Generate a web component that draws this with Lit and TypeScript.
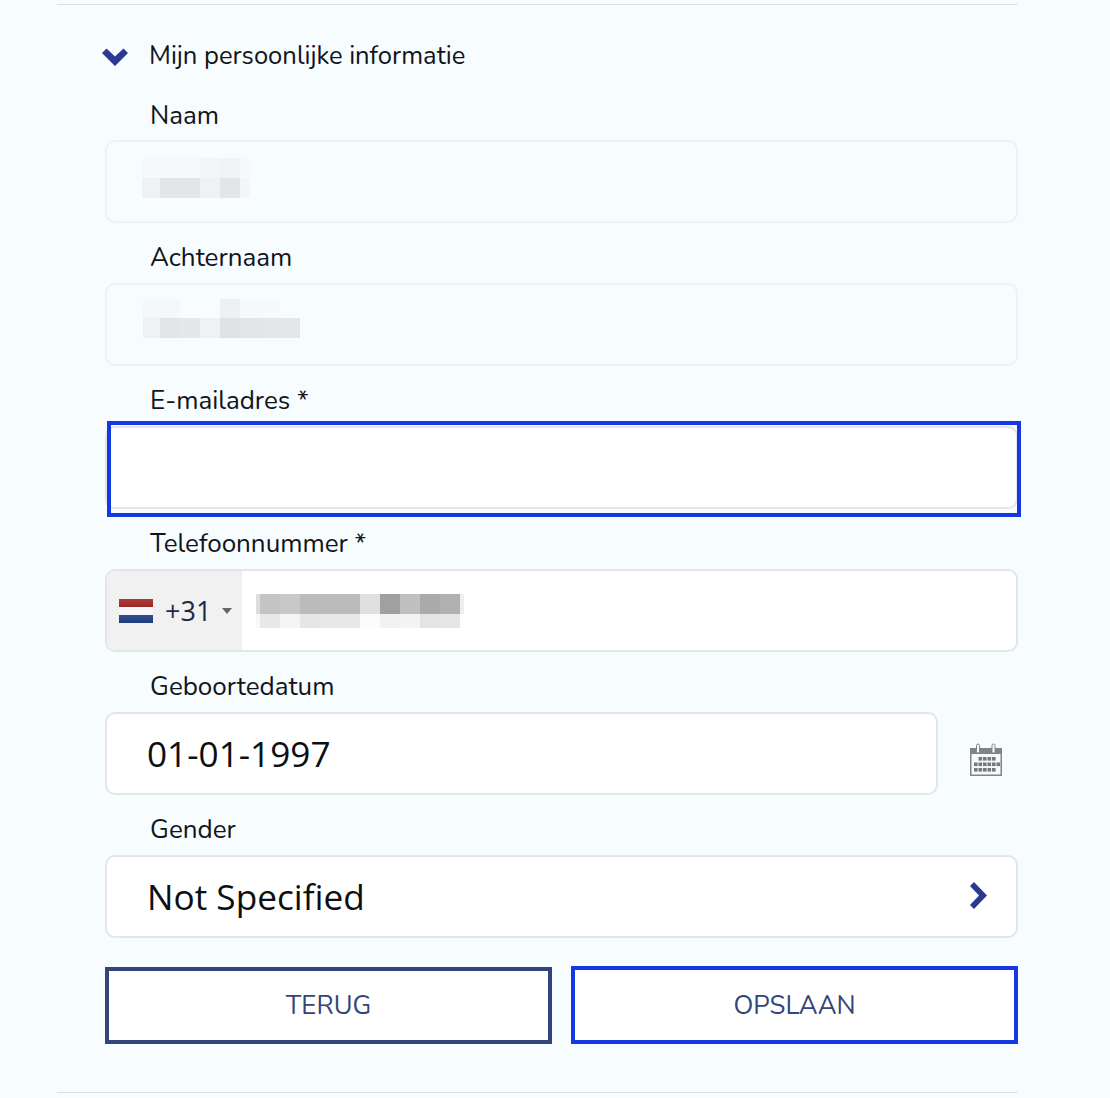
import { LitElement, html, css, svg } from "lit";
import { customElement } from "lit/decorators.js";

type Cell = [number, string];

const NAME_ROWS: Cell[][] = [
  [[18, "#f6f8fa"], [40, "#f7fafc"], [20, "#f3f6f8"], [20, "#f1f3f6"], [10, "#f7fafc"]],
  [[18, "#eff1f3"], [40, "#e3e5e8"], [20, "#eff1f3"], [20, "#e3e5e8"], [10, "#f3f5f7"]],
];
const SURNAME_ROWS: Cell[][] = [
  [[37, "#f5f8fa"], [40, "#f9fcfe"], [20, "#eef1f4"], [40, "#f7fafc"], [20, "transparent"]],
  [[17, "#eff1f3"], [20, "#e3e5e8"], [20, "#e5e7ea"], [20, "#eff1f3"], [20, "#dfe1e4"], [20, "#e3e5e8"], [40, "#e4e6e9"]],
];
const PHONE_ROWS: Cell[][] = [
  [[4, "#dddddd"], [20, "#c4c4c4"], [20, "#c8c8c8"], [60, "#bbbbbb"], [20, "#e0e0e0"], [20, "#a0a0a0"], [20, "#c0c0c0"], [20, "#aaaaaa"], [20, "#b0b0b0"], [4, "#eeeeee"]],
  [[4, "#f8f8f8"], [20, "#e8e8e8"], [20, "#f5f5f5"], [20, "#e6e6e6"], [40, "#e8e8e8"], [20, "#fcfcfc"], [20, "#f2f2f2"], [20, "#f4f4f4"], [20, "#e4e4e4"], [20, "#e6e6e6"]],
];

const calendarCells = () => {
  const cells = [];
  const rows = [
    [14, [9.5, 14, 18.5, 23]],
    [19.5, [5, 9.5, 14, 18.5, 23, 27.5]],
    [25, [5, 9.5, 14, 18.5, 23]],
  ] as [number, number[]][];
  for (const [y, xs] of rows) {
    for (const x of xs) {
      cells.push(svg`<rect x=${x} y=${y} width="3.6" height="3.6" fill="#74797c"></rect>`);
    }
  }
  return cells;
};

@customElement("app-root")
export class AppRoot extends LitElement {
  static styles = css`
    :host {
      display: block;
      width: 1110px;
      height: 1098px;
      overflow: hidden;
      background: #f7fcff;
      font-family: "Nunito", "Noto Sans", "Open Sans", sans-serif;
      color: #11151a;
    }
    .page {
      width: 961px;
      margin-left: 57px;
      padding-top: 4px;
    }
    .rule {
      height: 1px;
      background: #d9e2e8;
    }
    .title {
      display: flex;
      align-items: center;
      height: 30px;
      margin: 35px 0 0 44px;
      gap: 20px;
      font-size: 25.6px;
    }
    .title svg { width: 28px; height: 20px; flex: none; margin-top: 3px; }
    .form {
      padding-left: 48px;
    }
    .label {
      height: 30px;
      line-height: 30px;
      padding: 20px 0 0 45px;
      margin-bottom: 10px;
      font-size: 26px;
    }
    .label.first { padding-top: 0; margin-top: 31px; margin-bottom: 9px; }
    .field {
      position: relative;
      box-sizing: border-box;
      display: flex;
      align-items: center;
      height: 83px;
      border: 2px solid #e2e6e9;
      border-radius: 10px;
      background: #fff;
      font-family: "Open Sans", sans-serif;
      font-size: 35.2px;
      color: #0c0f12;
    }
    .field.off {
      background: transparent;
      border-color: #eff2f4;
    }
    .focus {
      position: absolute;
      left: 0px;
      top: -7px;
      right: -5px;
      bottom: -10px;
      border: 4px solid #1737e2;
    }
    .value { padding-left: 40px; margin-top: -2px; }
    .between { justify-content: space-between; }
    .between svg { width: 19px; height: 29px; margin-right: 28px; margin-top: -2px; }
    .date-row {
      display: flex;
      align-items: center;
    }
    .date-row .field { width: 833px; flex: none; }
    .cal { width: 34px; height: 34px; margin: 13px 0 0 31px; flex: none; }
    .prefix {
      display: flex;
      align-items: center;
      align-self: stretch;
      box-sizing: border-box;
      width: 135px;
      padding-left: 12px;
      background: #f1f1f1;
      border-radius: 8px 0 0 8px;
      font-size: 27px;
      color: #1c2a4a;
      flex: none;
    }
    .flag {
      display: flex;
      flex-direction: column;
      width: 34px;
      height: 24px;
      margin-right: 12px;
      flex: none;
    }
    .flag i { flex: 1; display: block; }
    .flag .red { background: linear-gradient(#b03a38, #992a2a); }
    .flag .white { background: #f6f6f8; }
    .flag .blue { background: linear-gradient(#2f4f96, #233c78); }
    .caret {
      width: 0;
      height: 0;
      margin-left: 11px;
      border-left: 5px solid transparent;
      border-right: 5px solid transparent;
      border-top: 6px solid #666;
    }
    .blur {
      display: flex;
      flex-direction: column;
      flex: none;
    }
    .blur-row { display: flex; }
    .blur-row span { display: block; flex: none; }
    .blur.name { margin: -8px 0 0 35px; }
    .blur.surname { margin: -12px 0 0 36px; }
    .blur.phone { margin: 0 0 0 14px; }
    .actions {
      display: flex;
      align-items: flex-end;
      gap: 19px;
      margin-top: 28px;
    }
    .btn {
      box-sizing: border-box;
      flex: 1;
      display: flex;
      align-items: center;
      justify-content: center;
      height: 77px;
      border: 4px solid #344378;
      background: #fff;
      font-size: 25.8px;
      color: #344378;
    }
    .btn.primary { height: 78px; border-color: #1737e2; }
    .rule.bottom { margin-top: 48px; }
  `;

  private blur(rows: Cell[][], kind: string, heights: number[]) {
    return html`<div class="blur ${kind}">
      ${rows.map(
        (row, r) => html`<div class="blur-row">
          ${row.map(
            ([w, c]) => html`<span style="width:${w}px;height:${heights[r]}px;background:${c}"></span>`
          )}
        </div>`
      )}
    </div>`;
  }

  render() {
    return html`
      <div class="page">
        <div class="rule"></div>
        <div class="title">
          <svg viewBox="0 0 28 20"><path d="M1 6 L5.5 1.6 L14 9.6 L22.5 1.6 L27 6 L14 19 Z" fill="#2b3990"></path></svg>
          <span>Mijn persoonlijke informatie</span>
        </div>
        <div class="form">
          <div class="label first">Naam</div>
          <div class="field off">${this.blur(NAME_ROWS, "name", [20, 20])}</div>
          <div class="label">Achternaam</div>
          <div class="field off">${this.blur(SURNAME_ROWS, "surname", [19, 20])}</div>
          <div class="label">E-mailadres *</div>
          <div class="field"><div class="focus"></div></div>
          <div class="label">Telefoonnummer *</div>
          <div class="field">
            <div class="prefix">
              <span class="flag"><i class="red"></i><i class="white"></i><i class="blue"></i></span>
              <span>+31</span>
              <span class="caret"></span>
            </div>
            ${this.blur(PHONE_ROWS, "phone", [20, 14])}
          </div>
          <div class="label">Geboortedatum</div>
          <div class="date-row">
            <div class="field"><span class="value">01-01-1997</span></div>
            <svg class="cal" viewBox="0 0 34 34">
              <path d="M1 5 H33 V33 H1 Z" fill="#7f8487"></path>
              <rect x="2.5" y="11" width="29" height="20.5" fill="#f8fafb"></rect>
              <rect x="7.5" y="1" width="3" height="9" rx="1.5" fill="#f7fcff" stroke="#7f8487" stroke-width="1"></rect>
              <rect x="23" y="1" width="3" height="9" rx="1.5" fill="#f7fcff" stroke="#7f8487" stroke-width="1"></rect>
              ${calendarCells()}
            </svg>
          </div>
          <div class="label">Gender</div>
          <div class="field between">
            <span class="value">Not Specified</span>
            <svg viewBox="0 0 19 29"><path d="M5 1 L18 14.5 L5 28 L1 24 L10 14.5 L1 5 Z" fill="#2b3990"></path></svg>
          </div>
          <div class="actions">
            <div class="btn">TERUG</div>
            <div class="btn primary">OPSLAAN</div>
          </div>
        </div>
        <div class="rule bottom"></div>
      </div>
    `;
  }
}
